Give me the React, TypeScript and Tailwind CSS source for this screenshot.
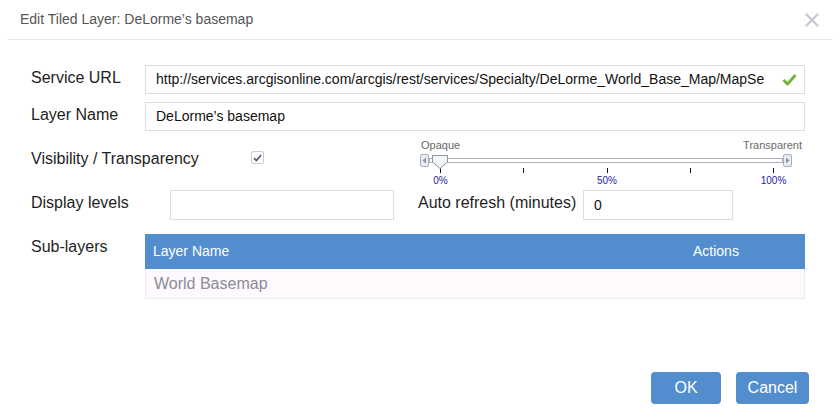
import React from "react";

const font = { fontFamily: '"Liberation Sans", Arial, sans-serif' };

function CloseIcon() {
  return (
    <svg width="14" height="14" viewBox="0 0 14 14" aria-hidden>
      <path d="M1.5 1.5 L12.5 12.5 M12.5 1.5 L1.5 12.5" stroke="#c3c7d2" strokeWidth="2.2" strokeLinecap="round" />
    </svg>
  );
}

function OkMark() {
  return (
    <svg width="15" height="13" viewBox="0 0 15 13" aria-hidden>
      <path d="M1.5 7 L5.5 11 L13.5 2" fill="none" stroke="#76b23e" strokeWidth="3" strokeLinejoin="round" />
    </svg>
  );
}

function ArrowBtn({ dir }: { dir: "left" | "right" }) {
  return (
    <div className="flex h-[13px] w-[9px] items-center justify-center rounded-[2px] border border-[#a9b1bd] bg-[#e9edf1]">
      <svg width="5" height="7" viewBox="0 0 5 7" aria-hidden>
        {dir === "left" ? (
          <path d="M4 0.5 L0.5 3.5 L4 6.5 Z" fill="#8a94a4" />
        ) : (
          <path d="M1 0.5 L4.5 3.5 L1 6.5 Z" fill="#8a94a4" />
        )}
      </svg>
    </div>
  );
}

function TransparencySlider() {
  return (
    <div className="w-[382px] pt-[8px]">
      <div className="flex h-[13px] justify-between pl-px text-[11px] leading-[13px] text-[#6a6a6a]">
        <span>Opaque</span>
        <span>Transparent</span>
      </div>
      <div className="relative mt-[2px] flex h-[13px] w-[372px] items-center">
        <ArrowBtn dir="left" />
        <div className="h-[5px] flex-1 border border-[#aab3bd] bg-white" />
        <ArrowBtn dir="right" />
        <svg className="absolute left-[12px] top-[1px]" width="16" height="14" viewBox="0 0 16 14" aria-hidden>
          <path d="M0.5 0.5 H15.5 V7 L8 13.5 L0.5 7 Z" fill="#f3f5f8" stroke="#8d96a3" />
        </svg>
      </div>
      <div className="ml-[20px] mt-px flex h-[5px] w-[334px] justify-between">
        {[0, 1, 2, 3, 4].map((i) => (
          <div key={i} className="h-[5px] w-px bg-[#111]" />
        ))}
      </div>
      <div className="ml-[20px] mt-[3px] flex h-[10px] w-[334px] justify-between text-[10px] leading-[10px] text-[#2525a0]">
        {["0%", "50%", "100%"].map((t) => (
          <div key={t} className="flex w-px justify-center whitespace-nowrap">
            {t}
          </div>
        ))}
      </div>
    </div>
  );
}

export default function App() {
  return (
    <div style={font} className="flex h-[420px] w-[840px] flex-col bg-white text-[#1e1e1e]">
      <div className="mx-[7px] flex h-[40px] items-center justify-between border-b border-[#e3eaf1] pl-[13px] pr-[14px]">
        <span className="text-[14px] text-[#555]">Edit Tiled Layer: DeLorme&rsquo;s basemap</span>
        <CloseIcon />
      </div>

      <div className="pl-[31px] pt-[25px]">
        <div className="flex h-[29px] items-center">
          <div className="w-[114px] -translate-y-[2px] text-[16px]">Service URL</div>
          <div className="flex h-[29px] w-[660px] items-center justify-between border border-[#dcdde3] pl-[10px] pr-[7px] text-[14px] text-[#111]">
            <span className="whitespace-nowrap">
              http://services.arcgisonline.com/arcgis/rest/services/Specialty/DeLorme_World_Base_Map/MapSe
            </span>
            <OkMark />
          </div>
        </div>

        <div className="mt-[8px] flex h-[29px] items-center">
          <div className="w-[114px] -translate-y-[2px] text-[16px]">Layer Name</div>
          <div className="flex h-[29px] w-[660px] items-center border border-[#dcdde3] pl-[10px] text-[14px] text-[#111]">
            DeLorme&rsquo;s basemap
          </div>
        </div>

        <div className="flex h-[59px]">
          <div className="w-[220px] pt-[19px] text-[16px] leading-[18px]">Visibility / Transparency</div>
          <div className="pt-[20px]">
            <div className="flex h-[13px] w-[13px] items-center justify-center rounded-[2px] border border-[#c9cbd3] bg-white">
              <svg width="9" height="8" viewBox="0 0 9 8" aria-hidden>
                <path d="M1 4.2 L3.4 6.5 L8 1" fill="none" stroke="#4b5370" strokeWidth="1.6" />
              </svg>
            </div>
          </div>
          <div className="ml-[156px]">
            <TransparencySlider />
          </div>
        </div>

        <div className="flex h-[30px] items-center">
          <div className="w-[139px] -translate-y-[2px] text-[16px]">Display levels</div>
          <div className="h-[30px] w-[224px] border border-[#dcdde3]" />
          <div className="ml-[24px] w-[165px] -translate-y-[2px] text-[16px]">Auto refresh (minutes)</div>
          <div className="flex h-[30px] w-[150px] items-center border border-[#dcdde3] pl-[10px] text-[14px] text-[#111]">
            0
          </div>
        </div>

        <div className="mt-[14px] flex">
          <div className="w-[114px] pt-[4px] text-[16px] leading-[18px]">Sub-layers</div>
          <div className="w-[660px]">
            <div className="flex h-[35px] items-center bg-[#528ecd] text-[14px] text-white">
              <span className="w-[540px] pl-[8px]">Layer Name</span>
              <span className="pl-[8px]">Actions</span>
            </div>
            <div className="flex h-[30px] items-center border-x border-b border-[#ececf1] bg-[#fdf9fd] pl-[8px] text-[16px] text-[#8a8c98]">
              World Basemap
            </div>
          </div>
        </div>
      </div>

      <div className="mt-auto flex justify-end gap-[15px] pb-[16px] pr-[31px]">
        <button type="button" className="h-[32px] w-[70px] rounded-[4px] bg-[#528ecd] text-[16px] text-white">
          OK
        </button>
        <button type="button" className="h-[32px] w-[73px] rounded-[4px] bg-[#528ecd] text-[16px] text-white">
          Cancel
        </button>
      </div>
    </div>
  );
}
